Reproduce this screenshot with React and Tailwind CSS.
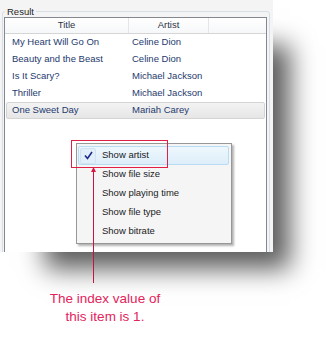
export default function App() {
  const rows = [
    ["My Heart Will Go On", "Celine Dion"],
    ["Beauty and the Beast", "Celine Dion"],
    ["Is It Scary?", "Michael Jackson"],
    ["Thriller", "Michael Jackson"],
    ["One Sweet Day", "Mariah Carey"],
  ];
  const items = ["Show artist", "Show file size", "Show playing time", "Show file type", "Show bitrate"];
  return (
    <div className="relative w-[333px] h-[346px] bg-white overflow-hidden font-['Liberation_Sans',Arial,sans-serif]">
      <div className="w-[273px] h-[252px] bg-[#f4f4f4] overflow-hidden shadow-[31px_31px_24px_-14px_rgba(0,0,0,0.64)]">
        <fieldset className="mt-[5px] ml-[2px] w-[268px] h-[262px] border border-[#d5dfe5] rounded-[3px] px-[1px] pb-0">
          <legend className="ml-[1px] px-[2px] text-[9.5px] leading-[13px] text-[#1e1e1e]">Result</legend>
          <div className="-mt-[1px] w-[263px] h-[250px] border border-[#828790] bg-white">
            <div className="flex h-[16px] border-b border-[#d5d5d5] bg-gradient-to-b from-white to-[#f6f7f9] text-[9.5px] text-[#2b3547]">
              <div className="w-[124px] border-r border-[#e3e5ea] flex items-center justify-center">Title</div>
              <div className="w-[80px] border-r border-[#e3e5ea] flex items-center justify-center">Artist</div>
              <div className="flex-1" />
            </div>
            {rows.map(([t, a], i) => (
              <div
                key={t}
                className={
                  "flex items-center h-[17px] mx-[1px] border rounded-[2px] text-[9.5px] text-[#1e3a6e] " +
                  (i === 4 ? "border-[#d4d4d4] bg-gradient-to-b from-[#f3f3f3] to-[#e6e6e6]" : "border-transparent")
                }
              >
                <div className="w-[121px] pl-[5px]">{t}</div>
                <div className="pl-[4px]">{a}</div>
              </div>
            ))}
          </div>
        </fieldset>
      </div>

      <div className="absolute left-[76px] top-[143px] w-[156px] h-[101px] border border-[#979797] bg-[#f5f5f5] shadow-[2px_2px_2px_rgba(0,0,0,0.3)] pt-[2px]">
        {items.map((it, i) => (
          <div
            key={it}
            className={
              "flex items-center h-[19px] ml-[1px] w-[151px] border rounded-[2px] text-[9.5px] text-[#1b1b1b] " +
              (i === 0 ? "border-[#b8dcf1] bg-gradient-to-b from-[#eef7fd] to-[#ddeefa]" : "border-transparent")
            }
          >
            <div
              className={
                "ml-[1px] w-[16px] h-[16px] rounded-[2px] border flex items-center justify-center " +
                (i === 0 ? "border-[#cfe3f3] bg-[#e2eefa]" : "border-transparent")
              }
            >
              {i === 0 && (
                <svg width="9" height="9" viewBox="0 0 9 9">
                  <path d="M1 4.5 L3.5 7.5 L8 1" fill="none" stroke="#1d2a8a" strokeWidth="1.6" />
                </svg>
              )}
            </div>
            <div className="ml-[6px]">{it}</div>
          </div>
        ))}
      </div>

      <div className="absolute left-[71px] top-[140px] w-[97px] h-[28px] border border-[#df1f45]" />
      <svg className="absolute left-[90px] top-[166px]" width="7" height="118" viewBox="0 0 7 118">
        <line x1="3.5" y1="3" x2="3.5" y2="117" stroke="#c8123f" strokeWidth="1" />
        <path d="M3.5 1 L1 6 L6 6 Z" fill="#d8163f" />
      </svg>

      <div className="mt-[38px] w-[210px] text-center text-[13.5px] leading-[18px] text-[#e3245c]">
        The index value of
        <br />
        this item is 1.
      </div>
    </div>
  );
}
